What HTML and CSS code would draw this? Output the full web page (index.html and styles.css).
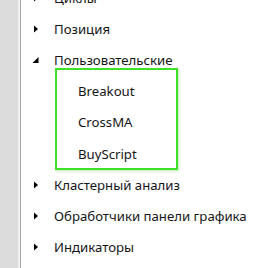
FILE: index.html
```html
<!DOCTYPE html>
<html lang="ru">
<head>
    <meta charset="UTF-8">
    <title>Дерево скриптов</title>
    <link rel="stylesheet" href="styles.css">
</head>
<body>
    <div class="panel">
        <div class="gutter"></div>
        <ul class="tree">
            <li class="node">
                <svg class="arrow" width="8" height="8" viewBox="0 0 8 8"><path d="M2 0.5 L6 4 L2 7.5 Z"/></svg>
                <span>Циклы</span>
            </li>
            <li class="node">
                <svg class="arrow" width="8" height="8" viewBox="0 0 8 8"><path d="M2 0.5 L6 4 L2 7.5 Z"/></svg>
                <span>Позиция</span>
            </li>
            <li class="node">
                <svg class="arrow" width="8" height="8" viewBox="0 0 8 8"><path d="M6.5 1 L6.5 7 L0.5 7 Z"/></svg>
                <span>Пользовательские</span>
            </li>
            <li class="leaf">Breakout</li>
            <li class="leaf">CrossMA</li>
            <li class="leaf">BuyScript</li>
            <li class="node">
                <svg class="arrow" width="8" height="8" viewBox="0 0 8 8"><path d="M2 0.5 L6 4 L2 7.5 Z"/></svg>
                <span>Кластерный анализ</span>
            </li>
            <li class="node">
                <svg class="arrow" width="8" height="8" viewBox="0 0 8 8"><path d="M2 0.5 L6 4 L2 7.5 Z"/></svg>
                <span>Обработчики панели графика</span>
            </li>
            <li class="node">
                <svg class="arrow" width="8" height="8" viewBox="0 0 8 8"><path d="M2 0.5 L6 4 L2 7.5 Z"/></svg>
                <span>Индикаторы</span>
            </li>
        </ul>
        <div class="highlight"></div>
    </div>
</body>
</html>
```

FILE: styles.css
```css
body {
    margin: 0;
    font-family: "Noto Sans", sans-serif;
    font-size: 13.2px;
    color: #151515;
    background: #fff;
}
.panel {
    position: relative;
    display: flex;
    height: 268px;
    overflow: hidden;
}
.gutter {
    width: 18px;
    flex: none;
    background: #dcdcdc;
    border-right: 2px solid #f2f2f2;
    box-shadow: 1px 0 0 #a5a5a5;
}
.tree {
    list-style: none;
    margin: -18px 0 0 0;
    padding: 0;
    flex: 1;
}
.tree li {
    height: 31.2px;
    display: flex;
    align-items: center;
    white-space: nowrap;
}
.node {
    padding-left: 12px;
}
.arrow {
    width: 8px;
    height: 8px;
    margin-right: 14px;
    fill: #000;
}
.leaf {
    padding-left: 58px;
}
.highlight {
    position: absolute;
    left: 55px;
    top: 68px;
    width: 119px;
    height: 98px;
    border: 2px solid #3fe02a;
    box-shadow: 1px 1px 2px rgba(60, 200, 40, 0.35);
}
```
